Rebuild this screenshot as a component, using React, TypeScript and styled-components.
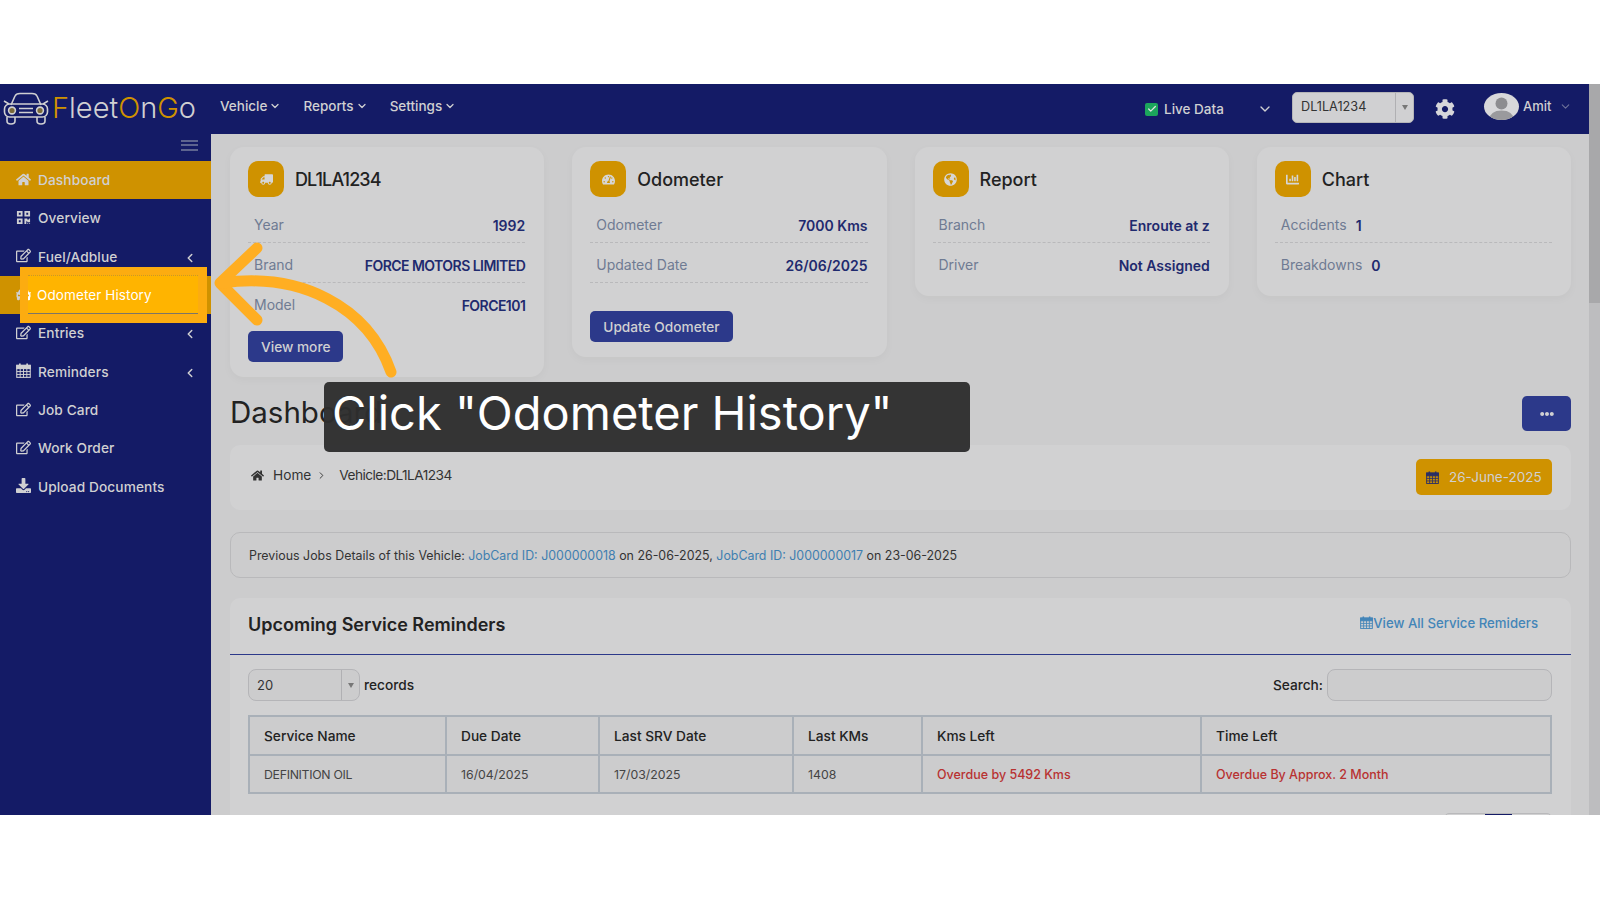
import React from "react";
import styled, { createGlobalStyle } from "styled-components";
import {
  FaHome,
  FaQrcode,
  FaRegEdit,
  FaDownload,
  FaTachometerAlt,
  FaTruck,
  FaGlobeAmericas,
  FaChartBar,
  FaCog,
  FaEllipsisH,
  FaCar,
} from "react-icons/fa";
import { ChevronDown, ChevronLeft, ChevronRight, Check } from "lucide-react";

const navy = "#141b66";
const gold = "#cf9200";
const blue = "#2c398a";
const pageBg = "#cccccd";
const cardBg = "#d1d1d2";
const muted = "#d0d0d2";

const Global = createGlobalStyle`
  html, body { margin: 0; padding: 0; background: #fff; }
  body { font-family: Inter, "Open Sans", sans-serif; font-size: 14px; color: #222; }
  * { box-sizing: border-box; }
`;

const Frame = styled.div`
  position: relative;
  display: flex;
  margin-top: 84px;
  height: 731px;
  overflow: hidden;
  background: ${pageBg};
`;

const Page = styled.div`
  flex: 1;
  min-width: 0;
  display: flex;
  flex-direction: column;
`;

const Scrollbar = styled.div`
  width: 11px;
  background: #bdbdbf;
  &::before {
    content: "";
    display: block;
    height: 219px;
    background: #a8a8aa;
  }
`;

const TopBar = styled.header`
  height: 50px;
  flex: none;
  display: flex;
  align-items: center;
  background: ${navy};
  color: ${muted};
`;

const Logo = styled.div`
  width: 220px;
  display: flex;
  align-items: center;
  padding-left: 3px;
  gap: 3px;
  font-size: 29px;
  font-weight: 300;
  margin-top: -3px;
  span {
    color: ${gold};
  }
`;

const Menu = styled.nav`
  display: flex;
  gap: 22px;
  margin-top: -6px;
`;

const MenuItem = styled.div`
  display: flex;
  align-items: center;
  gap: 2px;
  font-weight: 500;
  font-size: 13.5px;
`;

const TopRight = styled.div`
  margin-left: auto;
  display: flex;
  align-items: center;
`;

const LiveCheck = styled.span`
  width: 13px;
  height: 13px;
  border-radius: 2px;
  background: #1ca65c;
  display: flex;
  align-items: center;
  justify-content: center;
  color: #e4e4e4;
  margin-right: 6px;
`;

const LiveText = styled.span`
  font-weight: 500;
  font-size: 13.5px;
  width: 109px;
  display: flex;
  justify-content: space-between;
  align-items: center;
`;

const VehicleSelect = styled.div`
  width: 122px;
  height: 31px;
  margin: -3px 0 0 19px;
  background: ${muted};
  border: 1px solid #b5b5b8;
  border-radius: 5px;
  display: flex;
  align-items: center;
  color: #333;
  font-size: 12.7px;
  padding-left: 8px;
  span {
    flex: 1;
    margin-top: -3px;
  }
`;

const Caret = styled.i`
  width: 18px;
  align-self: stretch;
  border-left: 1px solid #b0b0b3;
  display: flex;
  align-items: center;
  justify-content: center;
  &::after {
    content: "";
    border: 3.5px solid transparent;
    border-top: 5px solid #777;
    margin-top: 3px;
  }
`;

const Avatar = styled.div`
  width: 35px;
  height: 27px;
  border-radius: 50%;
  overflow: hidden;
  margin: -5px 4px 0 29px;
  background: #d8d8da;
`;

const Amit = styled.div`
  width: 66px;
  display: flex;
  align-items: center;
  gap: 8px;
  margin-top: -6px;
  font-weight: 500;
  font-size: 13px;
  svg {
    color: #6d7199;
  }
`;

const Body = styled.div`
  flex: 1;
  display: flex;
  min-height: 0;
`;

const Sidebar = styled.aside`
  width: 211px;
  flex: none;
  background: ${navy};
  color: ${muted};
`;

const Burger = styled.div`
  height: 27px;
  display: flex;
  align-items: center;
  justify-content: flex-end;
  padding-right: 13px;
  i {
    display: block;
    width: 17px;
    height: 11px;
    margin-top: -5px;
    border-top: 2px solid #5d648f;
    border-bottom: 2px solid #5d648f;
    position: relative;
  }
  i::after {
    content: "";
    position: absolute;
    left: 0;
    right: 0;
    top: 2.5px;
    height: 2px;
    background: #5d648f;
  }
`;

const SideItem = styled.div<{ $active?: boolean }>`
  position: relative;
  height: 38.33px;
  display: flex;
  align-items: center;
  padding-left: 16px;
  background: ${(p) => (p.$active ? gold : "transparent")};
  font-size: 13.7px;
  font-weight: 500;
  letter-spacing: 0.1px;
  > svg:first-child {
    width: 15px;
    height: 15px;
    margin: -2px 7px 0 0;
    flex: none;
  }
`;

const SideArrow = styled.span`
  margin-left: auto;
  margin-right: 14px;
  margin-top: 2px;
  display: flex;
`;

const Spotlight = styled.div`
  position: absolute;
  left: 20px;
  top: -9px;
  width: 187px;
  height: 56px;
  background: #fcac10;
  padding: 8px 9px 9px 8px;
  z-index: 2;
`;

const SpotInner = styled.div`
  position: relative;
  height: 100%;
  overflow: hidden;
  background: #ffb400;
  border-top: 1px dotted #c9952c;
  border-bottom: 1px solid #7d7566;
  color: #fff;
  display: flex;
  align-items: center;
  padding: 1px 0 0 9px;
  font-weight: 400;
  font-size: 13.5px;
  svg {
    position: absolute;
    left: -12px;
    top: 11px;
    width: 15px;
    height: 15px;
  }
`;

const Main = styled.main`
  flex: 1;
  min-width: 0;
  padding: 13px 18px 0 19px;
  overflow: hidden;
`;

const CardGrid = styled.div`
  display: grid;
  grid-template-columns: repeat(4, 1fr);
  gap: 28px;
  align-items: start;
`;

const Card = styled.section`
  background: ${cardBg};
  border-radius: 14px;
  padding: 14px 19px 13px 18px;
  box-shadow: 0 3px 10px rgba(0, 0, 0, 0.03);
`;

const CardHead = styled.div`
  display: flex;
  align-items: center;
  gap: 11px;
  margin-bottom: 6px;
  font-size: 18px;
  font-weight: 500;
  color: #222;
`;

const CardTitle = styled.span<{ $tight?: boolean }>`
  letter-spacing: ${(p) => (p.$tight ? "-0.9px" : "0")};
`;

const IconBox = styled.span`
  width: 36px;
  height: 36px;
  border-radius: 10px;
  background: ${gold};
  color: #d6d6d6;
  display: flex;
  align-items: center;
  justify-content: center;
  svg {
    width: 13px;
    height: 13px;
  }
`;

const Row = styled.div<{ $dashed?: boolean }>`
  height: 40px;
  display: flex;
  align-items: center;
  padding: 6px 0 0 6px;
  gap: 9px;
  border-bottom: 1px dashed ${(p) => (p.$dashed ? "#b9b9bb" : "transparent")};
`;

const RowLabel = styled.span`
  color: #6f7b93;
  font-size: 14px;
  margin-top: -2px;
`;

const RowValue = styled.span<{ $left?: boolean; $tight?: boolean }>`
  margin-left: ${(p) => (p.$left ? "0" : "auto")};
  color: #1f2a6e;
  font-weight: 600;
  font-size: 14px;
  letter-spacing: ${(p) => (p.$tight ? "-0.55px" : "0")};
`;

const Button = styled.button<{ $top: number }>`
  display: block;
  margin: ${(p) => p.$top}px 0 2px;
  height: 31px;
  padding: 0 13px;
  background: ${blue};
  color: ${muted};
  border: 0;
  border-radius: 5px;
  font: 500 13.7px Inter, sans-serif;
`;

const TitleRow = styled.div`
  display: flex;
  justify-content: space-between;
  align-items: center;
  margin-top: 19px;
`;

const PageTitle = styled.h1`
  margin: -3px 0 0;
  font-size: 29.5px;
  font-weight: 400;
  color: #222;
`;

const MoreButton = styled.button`
  width: 49px;
  height: 35px;
  background: ${blue};
  border: 0;
  border-radius: 5px;
  color: ${muted};
  display: flex;
  align-items: center;
  justify-content: center;
`;

const Breadcrumb = styled.div`
  margin-top: 14px;
  height: 65px;
  padding: 14px 19px 0 21px;
  display: flex;
  background: ${cardBg};
  border-radius: 10px;
  color: #333;
  font-size: 13.7px;
`;

const Crumbs = styled.div`
  display: flex;
  align-items: center;
  height: 32px;
  gap: 9px;
  svg {
    flex: none;
  }
`;

const CrumbLast = styled.span`
  margin-left: 3px;
  letter-spacing: -0.55px;
`;

const DateBadge = styled.div`
  margin-left: auto;
  height: 36px;
  width: 136px;
  background: ${gold};
  border-radius: 5px;
  color: ${muted};
  display: flex;
  align-items: center;
  padding-left: 10px;
  gap: 10px;
  font-size: 13.5px;
  svg {
    color: #2b2f66;
  }
`;

const Alert = styled.div`
  margin-top: 22px;
  height: 46px;
  padding: 0 18px;
  display: flex;
  align-items: center;
  border: 1px solid #b9b9bb;
  border-radius: 10px;
  font-size: 12.4px;
  color: #333;
  white-space: pre;
  a {
    color: #3f7fb0;
  }
`;

const ServiceCard = styled.section`
  margin-top: 20px;
  background: ${cardBg};
  border-radius: 10px 10px 0 0;
  padding-bottom: 30px;
`;

const ServiceHead = styled.div`
  height: 57px;
  padding: 0 33px 4px 18px;
  display: flex;
  align-items: center;
  justify-content: space-between;
  border-bottom: 1px solid ${blue};
`;

const ServiceTitle = styled.h2`
  margin: 0;
  font-size: 18px;
  font-weight: 600;
  color: #222;
`;

const ViewAll = styled.a`
  display: flex;
  align-items: center;
  margin-top: -3px;
  font-weight: 500;
  font-size: 13.2px;
  color: #4385b8;
`;

const Toolbar = styled.div`
  padding: 14px 19px 14px 18px;
  display: flex;
  align-items: center;
  font-weight: 500;
  font-size: 13.7px;
`;

const RecordsSelect = styled.div`
  width: 112px;
  height: 32px;
  border: 1px solid #b5b5b8;
  border-radius: 8px;
  background: ${pageBg};
  display: flex;
  align-items: center;
  padding-left: 8px;
  margin-right: 4px;
  font-size: 13px;
  font-weight: 400;
  color: #333;
  span {
    flex: 1;
  }
`;

const SearchLabel = styled.label`
  margin-left: auto;
  margin-right: 4px;
`;

const SearchInput = styled.div`
  width: 225px;
  height: 32px;
  border: 1px solid #b5b5b8;
  border-radius: 8px;
  background: ${pageBg};
`;

const TableWrap = styled.div`
  padding: 0 19px 0 18px;
`;

const Table = styled.table`
  width: 100%;
  table-layout: fixed;
  border-collapse: collapse;
  background: ${pageBg};
  border: 2px solid #a9b0b8;
  th,
  td {
    border: 2px solid #a9b0b8;
    padding: 0 0 0 14px;
    text-align: left;
  }
  th {
    height: 39px;
    font-weight: 500;
    font-size: 13.7px;
    color: #222;
  }
  td {
    height: 38px;
    font-size: 12.3px;
    color: #444;
  }
`;

const NameCell = styled.td`
  letter-spacing: -0.3px;
`;

const Overdue = styled.span`
  color: #b83232;
  font-weight: 500;
  font-size: 12.5px;
`;

const Pager = styled.div`
  margin: 19px 19px 0 auto;
  width: 108px;
  height: 30px;
  display: flex;
  border: 1px solid #b9b9bb;
  border-radius: 5px;
  span {
    flex: 1;
  }
`;

const PagerActive = styled.i`
  width: 27px;
  background: ${navy};
`;

const ArrowLayer = styled.svg`
  position: absolute;
  left: 0;
  top: 0;
  width: 1600px;
  height: 731px;
  pointer-events: none;
  z-index: 3;
`;

const Tooltip = styled.div`
  position: absolute;
  left: 324px;
  top: 298px;
  width: 646px;
  height: 70px;
  padding: 0 0 9px 8px;
  display: flex;
  align-items: center;
  background: rgba(46, 46, 46, 0.96);
  border-radius: 5px;
  color: #fff;
  font-size: 47px;
  font-weight: 400;
  white-space: pre;
  z-index: 4;
`;

const CarLogo = () => (
  <svg width="46" height="34" viewBox="0 0 46 34" fill="none" stroke="#cfcfd2" strokeWidth="1.6">
    <path d="M8 14 L12 5 Q13 2.5 17 2.5 H29 Q33 2.5 34 5 L38 14" />
    <path d="M1 10 L6 13 M45 10 L40 13" />
    <rect x="1.5" y="13" width="43" height="13" rx="5" />
    <path d="M4 26 v4 q0 3 4 3 q4 0 4 -3 v-4 M34 26 v4 q0 3 4 3 q4 0 4 -3 v-4" />
    <circle cx="9" cy="19.5" r="3.4" fill="#7a6a3a" />
    <circle cx="37" cy="19.5" r="3.4" fill="#7a6a3a" />
    <path d="M16 17.5 H30 M16 21.5 H30" />
  </svg>
);

const UserPhoto = () => (
  <svg width="35" height="27" viewBox="0 0 35 27">
    <circle cx="17.5" cy="10.5" r="6" fill="#8d8d90" />
    <path d="M5 27 Q6 17.5 17.5 17.5 Q29 17.5 30 27 Z" fill="#9a9a9d" />
  </svg>
);

const CalendarGrid = ({ size = 14 }: { size?: number }) => (
  <svg width={size} height={size} viewBox="0 0 14 14" fill="none" stroke="currentColor" strokeWidth="1">
    <rect x="0.7" y="2.2" width="12.6" height="11.2" fill="none" />
    <rect x="0.7" y="2.2" width="12.6" height="3" fill="currentColor" />
    <path d="M0.7 8 H13.3 M0.7 10.7 H13.3 M3.9 5 V13.4 M7 5 V13.4 M10.1 5 V13.4" strokeWidth="0.9" />
    <path d="M3.6 0.5 V3 M10.4 0.5 V3" strokeWidth="1.6" />
  </svg>
);

type Info = { label: string; value: string; dashed?: boolean; tight?: boolean };

const cards: {
  title: string;
  tight?: boolean;
  icon: React.ReactNode;
  inline?: boolean;
  rows: Info[];
  action?: { text: string; top: number };
}[] = [
  {
    title: "DL1LA1234",
    tight: true,
    icon: <FaTruck style={{ transform: "scaleX(-1)" }} />,
    rows: [
      { label: "Year", value: "1992", dashed: true },
      { label: "Brand", value: "FORCE MOTORS LIMITED", dashed: true, tight: true },
      { label: "Model", value: "FORCE101", tight: true },
    ],
    action: { text: "View more", top: 8 },
  },
  {
    title: "Odometer",
    icon: <FaTachometerAlt />,
    rows: [
      { label: "Odometer", value: "7000 Kms", dashed: true },
      { label: "Updated Date", value: "26/06/2025", dashed: true },
    ],
    action: { text: "Update Odometer", top: 28 },
  },
  {
    title: "Report",
    icon: <FaGlobeAmericas />,
    rows: [
      { label: "Branch", value: "Enroute at z", dashed: true },
      { label: "Driver", value: "Not Assigned" },
    ],
  },
  {
    title: "Chart",
    icon: <FaChartBar />,
    inline: true,
    rows: [
      { label: "Accidents", value: "1", dashed: true },
      { label: "Breakdowns", value: "0" },
    ],
  },
];

const sideItems: { label: string; icon: React.ReactNode; active?: boolean; sub?: boolean; spot?: boolean }[] = [
  { label: "Dashboard", icon: <FaHome />, active: true },
  { label: "Overview", icon: <FaQrcode /> },
  { label: "Fuel/Adblue", icon: <FaRegEdit />, sub: true },
  { label: "Odometer History", icon: <FaCar />, active: true, spot: true },
  { label: "Entries", icon: <FaRegEdit />, sub: true },
  { label: "Reminders", icon: <CalendarGrid size={15} />, sub: true },
  { label: "Job Card", icon: <FaRegEdit /> },
  { label: "Work Order", icon: <FaRegEdit /> },
  { label: "Upload Documents", icon: <FaDownload /> },
];

export default function App() {
  return (
    <>
      <Global />
      <Frame>
        <Page>
          <TopBar>
            <Logo>
              <CarLogo />
              <div>
                <span>F</span>leet<span>O</span>n<span>G</span>o
              </div>
            </Logo>
            <Menu>
              {["Vehicle", "Reports", "Settings"].map((m) => (
                <MenuItem key={m}>
                  {m}
                  <ChevronDown size={12} strokeWidth={2.5} />
                </MenuItem>
              ))}
            </Menu>
            <TopRight>
              <LiveCheck>
                <Check size={10} strokeWidth={3} />
              </LiveCheck>
              <LiveText>
                Live Data
                <ChevronDown size={16} strokeWidth={2} />
              </LiveText>
              <VehicleSelect>
                <span>DL1LA1234</span>
                <Caret />
              </VehicleSelect>
              <FaCog size={20} style={{ marginLeft: 21, color: "#d6d6da" }} />
              <Avatar>
                <UserPhoto />
              </Avatar>
              <Amit>
                Amit
                <ChevronDown size={13} />
              </Amit>
            </TopRight>
          </TopBar>
          <Body>
            <Sidebar>
              <Burger>
                <i />
              </Burger>
              {sideItems.map((s) => (
                <SideItem key={s.label} $active={s.active}>
                  {s.icon}
                  {s.spot ? null : s.label}
                  {s.sub && (
                    <SideArrow>
                      <ChevronLeft size={14} strokeWidth={2.5} />
                    </SideArrow>
                  )}
                  {s.spot && (
                    <Spotlight>
                      <SpotInner>
                        {s.icon}
                        {s.label}
                      </SpotInner>
                    </Spotlight>
                  )}
                </SideItem>
              ))}
            </Sidebar>
            <Main>
              <CardGrid>
                {cards.map((c) => (
                  <Card key={c.title}>
                    <CardHead>
                      <IconBox>{c.icon}</IconBox>
                      <CardTitle $tight={c.tight}>{c.title}</CardTitle>
                    </CardHead>
                    {c.rows.map((r) => (
                      <Row key={r.label} $dashed={r.dashed}>
                        <RowLabel>{r.label}</RowLabel>
                        <RowValue $left={c.inline} $tight={r.tight}>
                          {r.value}
                        </RowValue>
                      </Row>
                    ))}
                    {c.action && <Button $top={c.action.top}>{c.action.text}</Button>}
                  </Card>
                ))}
              </CardGrid>
              <TitleRow>
                <PageTitle>Dashboard</PageTitle>
                <MoreButton>
                  <FaEllipsisH size={14} />
                </MoreButton>
              </TitleRow>
              <Breadcrumb>
                <Crumbs>
                  <FaHome size={13} />
                  <span>Home</span>
                  <ChevronRight size={11} style={{ marginLeft: -4 }} />
                  <CrumbLast>Vehicle:DL1LA1234</CrumbLast>
                </Crumbs>
                <DateBadge>
                  <CalendarGrid size={13} />
                  26-June-2025
                </DateBadge>
              </Breadcrumb>
              <Alert>
                Previous Jobs Details of this Vehicle: <a>JobCard ID: J000000018</a> on 26-06-2025,{" "}
                <a>JobCard ID: J000000017</a> on 23-06-2025
              </Alert>
              <ServiceCard>
                <ServiceHead>
                  <ServiceTitle>Upcoming Service Reminders</ServiceTitle>
                  <ViewAll>
                    <CalendarGrid size={13} />
                    View All Service Remiders
                  </ViewAll>
                </ServiceHead>
                <Toolbar>
                  <RecordsSelect>
                    <span>20</span>
                    <Caret />
                  </RecordsSelect>
                  records
                  <SearchLabel>Search:</SearchLabel>
                  <SearchInput />
                </Toolbar>
                <TableWrap>
                  <Table>
                    <colgroup>
                      <col style={{ width: 197 }} />
                      <col style={{ width: 153 }} />
                      <col style={{ width: 194 }} />
                      <col style={{ width: 129 }} />
                      <col style={{ width: 279 }} />
                      <col />
                    </colgroup>
                    <thead>
                      <tr>
                        <th>Service Name</th>
                        <th>Due Date</th>
                        <th>Last SRV Date</th>
                        <th>Last KMs</th>
                        <th>Kms Left</th>
                        <th>Time Left</th>
                      </tr>
                    </thead>
                    <tbody>
                      <tr>
                        <NameCell>DEFINITION OIL</NameCell>
                        <td>16/04/2025</td>
                        <td>17/03/2025</td>
                        <td>1408</td>
                        <td>
                          <Overdue>Overdue by 5492 Kms</Overdue>
                        </td>
                        <td>
                          <Overdue>Overdue By Approx. 2 Month</Overdue>
                        </td>
                      </tr>
                    </tbody>
                  </Table>
                </TableWrap>
                <Pager>
                  <span />
                  <PagerActive />
                  <span />
                </Pager>
              </ServiceCard>
            </Main>
          </Body>
        </Page>
        <Scrollbar />
        <ArrowLayer viewBox="0 0 1600 731" fill="none" stroke="#ffae22" strokeWidth="11" strokeLinecap="round" strokeLinejoin="round">
          <path d="M257 164 L220 199 L257 236" />
          <path d="M222 199 C300 188 368 222 391 288" />
        </ArrowLayer>
        <Tooltip>Click "Odometer History"</Tooltip>
      </Frame>
    </>
  );
}
